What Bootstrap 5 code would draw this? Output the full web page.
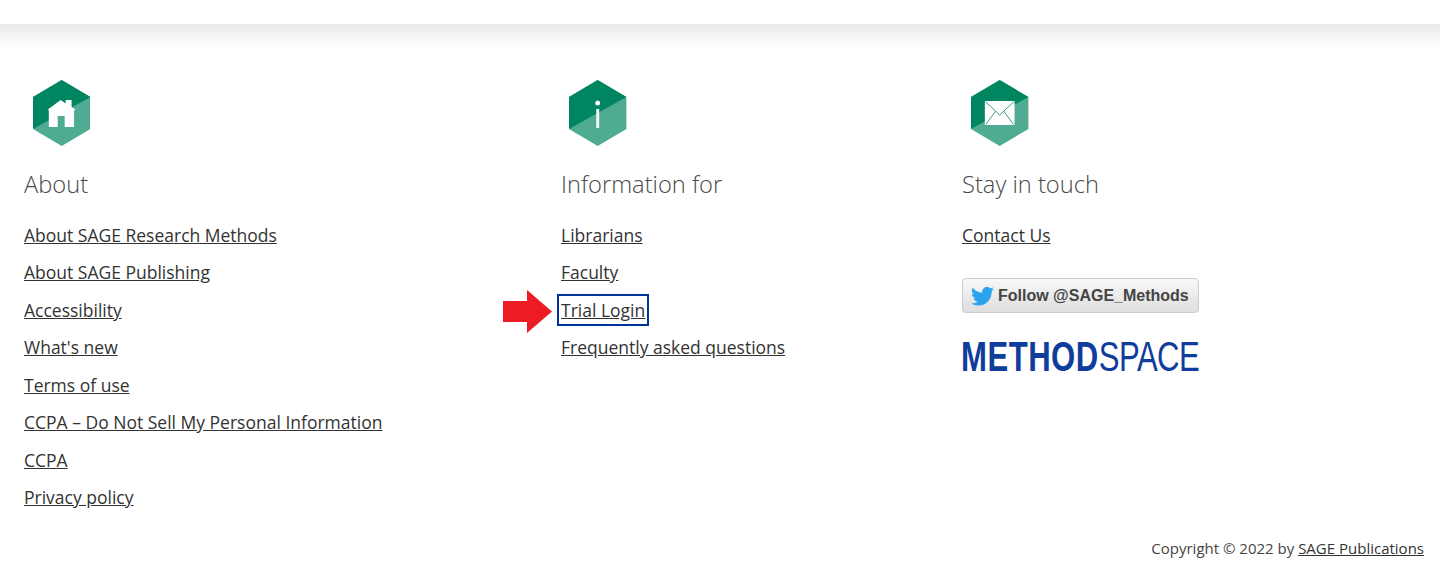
<!DOCTYPE html>
<html lang="en">
<head>
<meta charset="utf-8">
<title>Footer</title>
<link rel="stylesheet" href="https://cdn.jsdelivr.net/npm/bootstrap@5.3.0/dist/css/bootstrap.min.css">
<style>
html,body{height:579px;overflow:hidden}
body{font-family:"Open Sans",sans-serif;color:#444;background:#fff}
a{color:#333}
.top-blank{height:24px;background:#fff}
.top-fade{height:24px;background:linear-gradient(#e9e9e9,#fff)}
.foot-wrap{padding:32px 16px 0 24px}
.col-about{width:537px}
.col-info{width:401px}
.hex{display:block;width:57.400px;height:66px;margin-left:9px;margin-bottom:22px}
.col-info .hex{margin-left:8.300px}
.col-touch .hex{margin-left:9.300px}
.foot-title{font-size:23.700px;font-weight:300;line-height:33px;color:#4a4a4a;margin-bottom:21.750px}
.foot-links{font-size:17.500px;line-height:25px;margin:0}
.foot-links li{margin-bottom:12.500px}
.trial{position:relative;display:inline-block}
.trial a{outline:2px solid #003399;outline-offset:2px}
.arrow{position:absolute;left:-58px;top:-8px;width:49px;height:43px}
.tw-btn{width:237px;height:35px;margin-top:30.250px;border:1px solid #ccc;border-radius:4px;background:linear-gradient(#f8f8f8,#dedede);font-family:"Liberation Sans",sans-serif;font-weight:700;font-size:16px;color:#444;padding-left:8px;gap:4px}
.tw-btn svg{width:23px;height:23px}
.ms-logo{margin-top:22px;margin-left:-1px;font-family:"Liberation Sans",sans-serif;font-size:42px;line-height:44px;color:#0f3d9c;white-space:nowrap;width:237px;transform:scaleX(.74);transform-origin:left center}
.ms-logo b{font-weight:700;letter-spacing:.7px}
.ms-logo span{font-weight:400;letter-spacing:-.7px}
.copy{font-size:15px;line-height:20px;color:#444;text-align:right;position:absolute;right:16px;top:538px}
</style>
</head>
<body>
<div class="top-blank"></div>
<div class="top-fade"></div>
<div class="foot-wrap d-flex">
  <div class="col-about">
    <svg class="hex" viewBox="0 0 58 66" preserveAspectRatio="none"><polygon points="29,0 58,17 58,49 29,66 0,49 0,17" fill="#4fac93"/><polygon points="29,0 58,17 0,49 0,17" fill="#008561"/><path d="M28 20 L33 23.500 V20 H39 V27 L43 29.500 L41.500 30.500 V47 H32 V36 H25 V47 H16 V30.500 L15 29.500Z" fill="#fff"/></svg>
    <h2 class="foot-title">About</h2>
    <ul class="list-unstyled foot-links">
      <li><a href="#">About SAGE Research Methods</a></li>
      <li><a href="#">About SAGE Publishing</a></li>
      <li><a href="#">Accessibility</a></li>
      <li><a href="#">What's new</a></li>
      <li><a href="#">Terms of use</a></li>
      <li><a href="#">CCPA – Do Not Sell My Personal Information</a></li>
      <li><a href="#">CCPA</a></li>
      <li><a href="#">Privacy policy</a></li>
    </ul>
  </div>
  <div class="col-info">
    <svg class="hex" viewBox="0 0 58 66" preserveAspectRatio="none"><polygon points="29,0 58,17 58,49 29,66 0,49 0,17" fill="#4fac93"/><polygon points="29,0 58,17 0,49 0,17" fill="#008561"/><circle cx="29" cy="23" r="2.500" fill="#fff"/><rect x="27.500" y="29" width="3" height="19" fill="#fff" opacity=".9"/></svg>
    <h2 class="foot-title">Information for</h2>
    <ul class="list-unstyled foot-links">
      <li><a href="#">Librarians</a></li>
      <li><a href="#">Faculty</a></li>
      <li><span class="trial"><svg class="arrow" viewBox="0 0 49 43"><polygon points="0,11 24,11 24,0 49,21.500 24,43 24,32 0,32" fill="#ed1c24"/></svg><a href="#">Trial Login</a></span></li>
      <li><a href="#">Frequently asked questions</a></li>
    </ul>
  </div>
  <div class="col-touch">
    <svg class="hex" viewBox="0 0 58 66" preserveAspectRatio="none"><polygon points="29,0 58,17 58,49 29,66 0,49 0,17" fill="#4fac93"/><polygon points="29,0 58,17 0,49 0,17" fill="#008561"/><rect x="14" y="21" width="30" height="24" fill="#fff"/><path d="M14.500 21.500 L29 35 L43.500 21.500 M15 44.500 L25 31 M43 44.500 L33 31" fill="none" stroke="#3f9d83" stroke-width="1"/></svg>
    <h2 class="foot-title">Stay in touch</h2>
    <ul class="list-unstyled foot-links">
      <li><a href="#">Contact Us</a></li>
    </ul>
    <div class="tw-btn d-flex align-items-center">
      <svg viewBox="0 0 16 16"><path fill="#2aa3ef" d="M5.026 15c6.038 0 9.341-5.003 9.341-9.334 0-.14 0-.282-.006-.422A6.685 6.685 0 0 0 16 3.542a6.658 6.658 0 0 1-1.889.518 3.301 3.301 0 0 0 1.447-1.817 6.533 6.533 0 0 1-2.087.793A3.286 3.286 0 0 0 7.875 6.03a9.325 9.325 0 0 1-6.767-3.429 3.289 3.289 0 0 0 1.018 4.382A3.323 3.323 0 0 1 .64 6.575v.045a3.288 3.288 0 0 0 2.632 3.218 3.203 3.203 0 0 1-.865.115 3.23 3.23 0 0 1-.614-.057 3.283 3.283 0 0 0 3.067 2.277A6.588 6.588 0 0 1 .78 13.58a6.32 6.32 0 0 1-.78-.045A9.344 9.344 0 0 0 5.026 15z"/></svg>
      <span>Follow @SAGE_Methods</span>
    </div>
    <div class="ms-logo"><b>METHOD</b><span>SPACE</span></div>
  </div>
</div>
<div class="copy">Copyright © 2022 by <a href="#">SAGE Publications</a></div>
</body>
</html>
